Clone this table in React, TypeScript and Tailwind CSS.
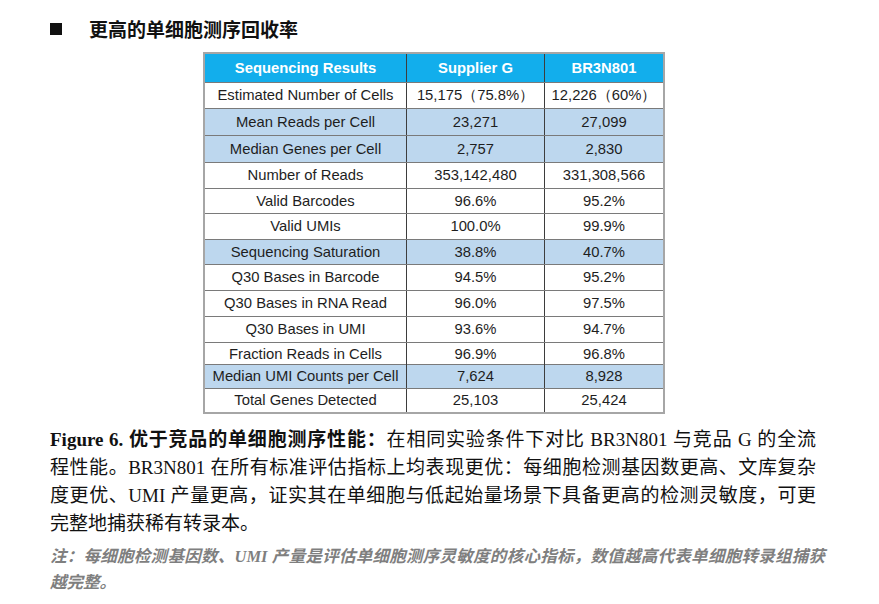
import React from "react";

type Row = { label: string; a: string; b: string; hl?: boolean; h: number };

const rows: Row[] = [
  { label: "Estimated Number of Cells", a: "15,175（75.8%）", b: "12,226（60%）", h: 26 },
  { label: "Mean Reads per Cell", a: "23,271", b: "27,099", hl: true, h: 27 },
  { label: "Median Genes per Cell", a: "2,757", b: "2,830", hl: true, h: 27 },
  { label: "Number of Reads", a: "353,142,480", b: "331,308,566", h: 26 },
  { label: "Valid Barcodes", a: "96.6%", b: "95.2%", h: 25 },
  { label: "Valid UMIs", a: "100.0%", b: "99.9%", h: 26 },
  { label: "Sequencing Saturation", a: "38.8%", b: "40.7%", hl: true, h: 25 },
  { label: "Q30 Bases in Barcode", a: "94.5%", b: "95.2%", h: 26 },
  { label: "Q30 Bases in RNA Read", a: "96.0%", b: "97.5%", h: 26 },
  { label: "Q30 Bases in UMI", a: "93.6%", b: "94.7%", h: 26 },
  { label: "Fraction Reads in Cells", a: "96.9%", b: "96.8%", h: 22 },
  { label: "Median UMI Counts per Cell", a: "7,624", b: "8,928", hl: true, h: 24 },
  { label: "Total Genes Detected", a: "25,103", b: "25,424", h: 24 },
];

export default function App() {
  return (
    <div className="w-[879px] h-[604px] bg-white pl-[50px] overflow-hidden">
      {/* Title */}
      <div className="pt-[15px] flex items-center h-[43px] font-['Noto_Sans_CJK_SC',sans-serif] font-bold text-[19px] leading-[28px] text-[#111]">
        <span className="inline-block w-[12px] h-[12px] bg-[#111] mr-[27px]" />
        <span>更高的单细胞测序回收率</span>
      </div>

      {/* Table */}
      <div className="ml-[153px] mt-[9px] w-[462px] border-2 border-[#a6a6a6] font-['Liberation_Sans',Arial,sans-serif] text-[14.8px] text-[#1e1e1e]">
        <div className="grid grid-cols-[202px_138px_1fr] h-[28px] bg-[#12aeec] text-white font-bold">
          <div className="flex items-center justify-center border-r border-[#3d3d3d]">Sequencing Results</div>
          <div className="flex items-center justify-center border-r border-[#3d3d3d]">Supplier G</div>
          <div className="flex items-center justify-center">BR3N801</div>
        </div>
        {rows.map((r) => (
          <div
            key={r.label}
            className={`grid grid-cols-[202px_138px_1fr] border-t border-[#7a7a7a] ${r.hl ? "bg-[#bdd7ee]" : "bg-white"}`}
            style={{ height: r.h }}
          >
            <div className="flex items-center justify-center border-r border-[#3d3d3d] whitespace-nowrap">{r.label}</div>
            <div className="flex items-center justify-center border-r border-[#3d3d3d] whitespace-nowrap">{r.a}</div>
            <div className="flex items-center justify-center whitespace-nowrap">{r.b}</div>
          </div>
        ))}
      </div>

      {/* Caption */}
      <div className="mt-[12px] w-[766px] font-['Liberation_Serif','Noto_Sans_CJK_SC',serif] text-[19px] leading-[28px] text-[#111]">
        <div className="text-justify [text-align-last:justify] whitespace-nowrap">
          <span className="font-bold">Figure 6. </span>
          <span className="font-bold">优于竞品的单细胞测序性能：</span>在相同实验条件下对比 BR3N801 与竞品 G 的全流
        </div>
        <div className="text-justify [text-align-last:justify] whitespace-nowrap">
          程性能。BR3N801 在所有标准评估指标上均表现更优：每细胞检测基因数更高、文库复杂
        </div>
        <div className="text-justify [text-align-last:justify] whitespace-nowrap">
          度更优、UMI 产量更高，证实其在单细胞与低起始量场景下具备更高的检测灵敏度，可更
        </div>
        <div>完整地捕获稀有转录本。</div>
      </div>

      {/* Note */}
      <div className="mt-[6px] w-[775px] font-['Liberation_Serif','Noto_Sans_CJK_SC',serif] text-[16.5px] leading-[26px] italic font-bold text-[#7f7f7f]">
        <div className="text-justify [text-align-last:justify] whitespace-nowrap">
          注：每细胞检测基因数、UMI 产量是评估单细胞测序灵敏度的核心指标，数值越高代表单细胞转录组捕获
        </div>
        <div>越完整。</div>
      </div>
    </div>
  );
}
